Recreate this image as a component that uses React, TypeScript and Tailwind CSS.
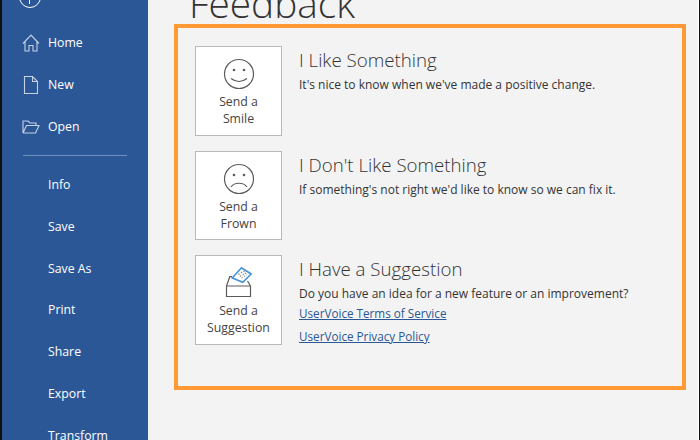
const FONT = "font-['Open_Sans','Noto_Sans',sans-serif]";

const HomeIcon = () => (
  <svg width="18" height="18" viewBox="0 0 18 18" fill="none" stroke="#c6d2e4" strokeWidth="1.1">
    <path d="M1 9.500 9 1l8 8.500M3 7.500v9.500h4v-5.500h4V17h4V7.500" />
  </svg>
);

const NewIcon = () => (
  <svg width="18" height="18" viewBox="0 0 18 18" fill="none" stroke="#c6d2e4" strokeWidth="1.1">
    <path d="M2.500.5h8l5 5v12h-13zM10.500.5v5h5" />
  </svg>
);

const OpenIcon = () => (
  <svg width="18" height="18" viewBox="0 0 18 18" fill="none" stroke="#c6d2e4" strokeWidth="1.1">
    <path d="M1 15V3h5l2 2h6v2.500M1 15h12.500L17 7.500H4.500L1 15" />
  </svg>
);

const TOP_ITEMS = [
  { label: "Home", icon: <HomeIcon /> },
  { label: "New", icon: <NewIcon /> },
  { label: "Open", icon: <OpenIcon /> },
];

const BOTTOM_ITEMS = ["Info", "Save", "Save As", "Print", "Share", "Export", "Transform"];

const Smile = () => (
  <svg width="32" height="32" viewBox="0 0 32 32" fill="none" stroke="#5c5c5c" strokeWidth="1.2">
    <circle cx="16" cy="16" r="14.500" />
    <circle cx="11" cy="12" r="1.300" fill="#5c5c5c" stroke="none" />
    <circle cx="21" cy="12" r="1.300" fill="#5c5c5c" stroke="none" />
    <path d="M8 20.500q8 6 16 0" />
  </svg>
);

const Frown = () => (
  <svg width="32" height="32" viewBox="0 0 32 32" fill="none" stroke="#5c5c5c" strokeWidth="1.2">
    <circle cx="16" cy="16" r="14.500" />
    <circle cx="11" cy="12" r="1.300" fill="#5c5c5c" stroke="none" />
    <circle cx="21" cy="12" r="1.300" fill="#5c5c5c" stroke="none" />
    <path d="M8 24c3.500-5 12.500-5 16 0" />
  </svg>
);

const Ballot = () => (
  <svg width="32" height="32" viewBox="0 0 32 32" fill="none" strokeWidth="1.200">
    <path d="M3.500 19h24v10.500h-24zM3.500 19l3.300-9.300H9M27.500 19l-3-5" stroke="#5c5c5c" />
    <path d="M9.200 11 18.500.8 28.200 7l-8.400 8.300z" fill="#fff" stroke="#3d8fdc" strokeWidth="1.500" />
    <path d="m15.500 6.500 4 4.500M18 5l4 4.500M20.500 4l3.500 4" stroke="#8f8f8f" strokeDasharray="1.500 1" />
  </svg>
);

const SECTIONS = [
  {
    icon: <Smile />,
    button: ["Send a", "Smile"],
    title: "I Like Something",
    text: "It's nice to know when we've made a positive change.",
  },
  {
    icon: <Frown />,
    button: ["Send a", "Frown"],
    title: "I Don't Like Something",
    text: "If something's not right we'd like to know so we can fix it.",
  },
  {
    icon: <Ballot />,
    button: ["Send a", "Suggestion"],
    title: "I Have a Suggestion",
    text: "Do you have an idea for a new feature or an improvement?",
    links: ["UserVoice Terms of Service", "UserVoice Privacy Policy"],
  },
];

export default function App() {
  return (
    <div className={`flex h-[440px] w-[700px] overflow-hidden bg-[#f3f3f3] ${FONT}`}>
      <div className="w-[2px] shrink-0 bg-[#111]" />

      {/* Sidebar */}
      <aside className="flex w-[146px] shrink-0 flex-col bg-[#2b5797] text-[12.300px] text-white">
        <div className="relative -mt-[14px] mb-[14px] ml-[17px] h-[22px] w-[22px] shrink-0 rounded-full border-[1.500px] border-white">
          <div className="absolute top-[6px] left-[8.500px] h-[11px] w-[1.500px] bg-white" />
        </div>
        {TOP_ITEMS.map((item) => (
          <div key={item.label} className="flex h-[42px] shrink-0 items-center gap-[8px] pl-[20px]">
            {item.icon}
            <span>{item.label}</span>
          </div>
        ))}
        <div className="mx-[21px] mt-[7px] mb-[8px] h-px shrink-0 bg-[#6f90bb]" />
        {BOTTOM_ITEMS.map((label) => (
          <div key={label} className="flex h-[41.900px] shrink-0 items-center pl-[46px]">
            {label}
          </div>
        ))}
      </aside>

      {/* Main */}
      <main className="flex min-w-0 flex-1 flex-col pl-[26px]">
        <h1 className="-mt-[17px] mb-[1px] h-[40px] pl-[15px] text-[38.800px] leading-[40px] font-light text-[#333]">
          Feedback
        </h1>
        <div className="flex h-[366px] w-[512px] flex-col gap-[15px] border-4 border-[#ff9933] pt-[18px] pl-[17px]">
          {SECTIONS.map((section) => (
            <div key={section.title} className="flex gap-[17px]">
              <button className="flex h-[89.500px] w-[87px] shrink-0 flex-col items-center border border-[#b9b9b9] bg-white pt-[11px] text-[12.300px] leading-[17px] text-[#444]">
                {section.icon}
                <span className="mt-[3px]">{section.button[0]}</span>
                <span>{section.button[1]}</span>
              </button>
              <div className="flex flex-col pt-[2px]">
                <h2 className="text-[18.700px] leading-[24px] font-light text-[#333]">{section.title}</h2>
                <p className="mt-[4px] text-[12px] leading-[18px] text-[#333]">{section.text}</p>
                {section.links && (
                  <div className="mt-[1px] flex flex-col gap-[5px]">
                    {section.links.map((link) => (
                      <a key={link} className="text-[11.700px] leading-[18px] text-[#2b5797] underline">
                        {link}
                      </a>
                    ))}
                  </div>
                )}
              </div>
            </div>
          ))}
        </div>
      </main>

      <div className="w-px shrink-0 bg-white" />
      <div className="w-px shrink-0 bg-[#111]" />
    </div>
  );
}
